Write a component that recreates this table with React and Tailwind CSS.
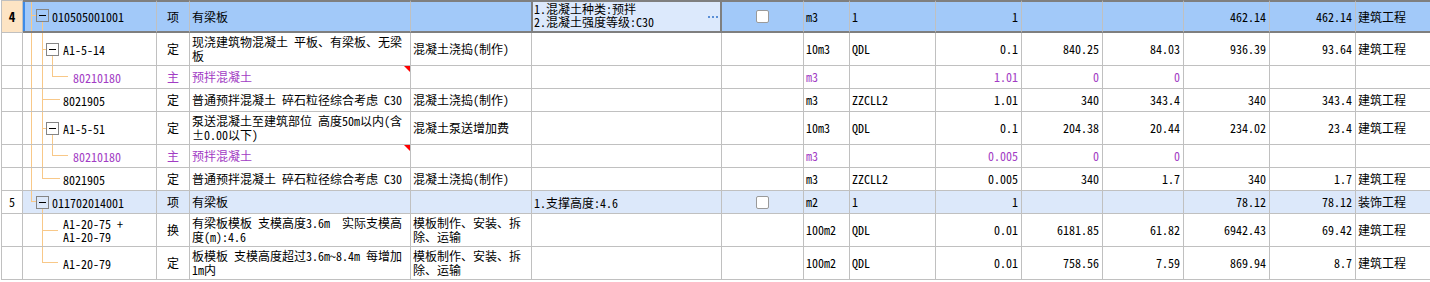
import React from "react";

const GRID =
  "grid grid-cols-[22px_134px_33px_221px_121px_190px_82px_46px_86px_86px_81px_81px_86px_86px_1fr]";

// tree connector drawings for the code column: [width, height, line path, box {x,y} or null]
const TREES = {
  item: [29, 29, "M8.5 0V29M8 13.5H13M19.5 20V29", { x: 13.5, y: 7.5 }],
  itemlast: [29, 22, "M8.5 0V11M8 10.5H13M19.5 18V22", { x: 13.5, y: 5.5 }],
  sub: [40, 32, "M8.5 0V32M19.5 0V32M19 16.5H23M29.5 23V32", { x: 23.5, y: 10.5 }],
  leaf2: [50, 22, "M8.5 0V22M19.5 0V22M29.5 0V11M29 10.5H45", null],
  subleaf: [40, 22, "M8.5 0V22M19.5 0V22M19 10.5H37", null],
  subleaflast: [40, 22, "M8.5 0V22M19.5 0V11M19 10.5H37", null],
  leafmid: [40, 32, "M19.5 0V32M19 16.5H35", null],
  leaflast: [40, 32, "M19.5 0V16M19 15.5H35", null],
};

function Tree({ type }) {
  const [w, h, d, box] = TREES[type];
  return (
    <svg width={w} height={h} className="shrink-0" shapeRendering="crispEdges">
      <path d={d} stroke="#f8c888" strokeWidth="1" fill="none" />
      {box && (
        <>
          <rect x={box.x} y={box.y} width="12" height="12" fill="none" stroke="#858585" />
          <path d={`M${box.x + 2.5} ${box.y + 6}H${box.x + 9.5}`} stroke="#000" />
        </>
      )}
    </svg>
  );
}

const rows = [
  { kind: "sel", no: "4", h: "h-[33px]", tree: "item", code: ["010505001001"], type: "项", name: ["有梁板"], work: [], feat: ["1.混凝土种类:预拌", "2.混凝土强度等级:C30"], check: true, unit: "m3", expr: "1", qty: "1", price: "", amt: "", tp: "462.14", ta: "462.14", cat: "建筑工程" },
  { h: "h-[33px]", tree: "sub", code: ["A1-5-14"], type: "定", name: ["现浇建筑物混凝土 平板、有梁板、无梁", "板"], work: ["混凝土浇捣(制作)"], unit: "10m3", expr: "QDL", qty: "0.1", price: "840.25", amt: "84.03", tp: "936.39", ta: "93.64", cat: "建筑工程" },
  { kind: "main", h: "h-[23px]", tree: "leaf2", code: ["80210180"], type: "主", name: ["预拌混凝土"], note: true, work: [], unit: "m3", expr: "", qty: "1.01", price: "0", amt: "0", tp: "", ta: "", cat: "" },
  { h: "h-[23px]", tree: "subleaf", code: ["8021905"], type: "定", name: ["普通预拌混凝土 碎石粒径综合考虑 C30"], work: ["混凝土浇捣(制作)"], unit: "m3", expr: "ZZCLL2", qty: "1.01", price: "340", amt: "343.4", tp: "340", ta: "343.4", cat: "建筑工程" },
  { h: "h-[33px]", tree: "sub", code: ["A1-5-51"], type: "定", name: ["泵送混凝土至建筑部位 高度50m以内(含", "±0.00以下)"], work: ["混凝土泵送增加费"], unit: "10m3", expr: "QDL", qty: "0.1", price: "204.38", amt: "20.44", tp: "234.02", ta: "23.4", cat: "建筑工程" },
  { kind: "main", h: "h-[23px]", tree: "leaf2", code: ["80210180"], type: "主", name: ["预拌混凝土"], note: true, work: [], unit: "m3", expr: "", qty: "0.005", price: "0", amt: "0", tp: "", ta: "", cat: "" },
  { h: "h-[23px]", tree: "subleaflast", code: ["8021905"], type: "定", name: ["普通预拌混凝土 碎石粒径综合考虑 C30"], work: ["混凝土浇捣(制作)"], unit: "m3", expr: "ZZCLL2", qty: "0.005", price: "340", amt: "1.7", tp: "340", ta: "1.7", cat: "建筑工程" },
  { kind: "hl", no: "5", h: "h-[23px]", tree: "itemlast", code: ["011702014001"], type: "项", name: ["有梁板"], work: [], feat: ["1.支撑高度:4.6"], check: true, unit: "m2", expr: "1", qty: "1", price: "", amt: "", tp: "78.12", ta: "78.12", cat: "装饰工程" },
  { h: "h-[33px]", tree: "leafmid", code: ["A1-20-75 +", "A1-20-79"], type: "换", name: ["有梁板模板 支模高度3.6m  实际支模高", "度(m):4.6"], work: ["模板制作、安装、拆", "除、运输"], unit: "100m2", expr: "QDL", qty: "0.01", price: "6181.85", amt: "61.82", tp: "6942.43", ta: "69.42", cat: "建筑工程" },
  { h: "h-[33px]", tree: "leaflast", code: ["A1-20-79"], type: "定", name: ["板模板 支模高度超过3.6m~8.4m 每增加", "1m内"], work: ["模板制作、安装、拆", "除、运输"], unit: "100m2", expr: "QDL", qty: "0.01", price: "758.56", amt: "7.59", tp: "869.94", ta: "8.7", cat: "建筑工程" },
];

function Lines({ lines, lead = "leading-[14px]" }) {
  return (
    <div className={`flex flex-col ${lead}`}>
      {lines.map((l, i) => (
        <div key={i} className="whitespace-pre">{l}</div>
      ))}
    </div>
  );
}

function Row({ r }) {
  const sel = r.kind === "sel";
  const hl = r.kind === "hl";
  const purple = r.kind === "main" ? "text-[#a23cc4]" : "text-black";
  const bg = sel ? "bg-[#a2c9f9]" : hl ? "bg-[#dce8fa]" : "bg-white";
  const frame = sel
    ? "border-t-2 border-b-2 border-t-[#7f7f7f] border-b-[#7f7f7f]"
    : "border-b";
  const cell = `border-r border-[#c0c0c0] ${frame} ${bg} ${purple} flex items-center overflow-hidden`;
  const num = `${cell} justify-end pr-[3px]`;
  const txt = `${cell} pl-[2px]`;

  return (
    <div className={`${GRID} ${r.h}`}>
      <div
        className={`border-l border-r border-b border-[#c0c0c0] flex items-center justify-center ${
          sel ? "border-t bg-[#fde4c4] font-bold text-[13px]" : "bg-white"
        }`}
      >
        {r.no}
      </div>
      <div className={`${cell} ${sel ? "shadow-[inset_2px_0_0_#3d8be8]" : ""}`}>
        <Tree type={r.tree} />
        <Lines lines={r.code} lead="leading-[13px]" />
      </div>
      <div className={`${cell} justify-center`}>{r.type}</div>
      <div className={`${txt} relative`}>
        <Lines lines={r.name} />
        {r.note && (
          <span className="absolute top-0 right-0 w-0 h-0 border-t-[6px] border-t-[#ff0000] border-l-[6px] border-l-transparent" />
        )}
      </div>
      <div className={`${txt} ${sel ? "border-r-[#7f7f7f]" : ""}`}>
        <Lines lines={r.work} />
      </div>
      <div
        className={
          sel
            ? `${txt} !bg-[#dce9fc] border-r-[#7f7f7f] shadow-[inset_1px_0_0_#7f7f7f,inset_-1px_0_0_#7f7f7f] items-start`
            : txt
        }
      >
        {r.feat && <Lines lines={r.feat} lead="leading-[13px]" />}
        {sel && (
          <div className="ml-auto mr-[3px] self-center flex gap-[2px]">
            <span className="w-[2px] h-[2px] bg-[#5b8fd6]" />
            <span className="w-[2px] h-[2px] bg-[#5b8fd6]" />
            <span className="w-[2px] h-[2px] bg-[#5b8fd6]" />
          </div>
        )}
      </div>
      <div className={`${cell} justify-center`}>
        {r.check && (
          <span className="w-[13px] h-[13px] bg-white border border-[#9a9a9a] rounded-[2px]" />
        )}
      </div>
      <div className={txt}>{r.unit}</div>
      <div className={txt}>{r.expr}</div>
      <div className={num}>{r.qty}</div>
      <div className={num}>{r.price}</div>
      <div className={num}>{r.amt}</div>
      <div className={num}>{r.tp}</div>
      <div className={num}>{r.ta}</div>
      <div className={`${txt} border-r-0`}>{r.cat}</div>
    </div>
  );
}

export default function App() {
  return (
    <div className="w-[1430px] h-[282px] bg-white overflow-hidden font-['Noto_Sans_Mono_CJK_SC','Liberation_Mono','Noto_Sans_CJK_SC',monospace] text-[12px] leading-[14px] text-black">
      <div className="ml-px">
        {rows.map((r, i) => (
          <Row key={i} r={r} />
        ))}
      </div>
    </div>
  );
}
